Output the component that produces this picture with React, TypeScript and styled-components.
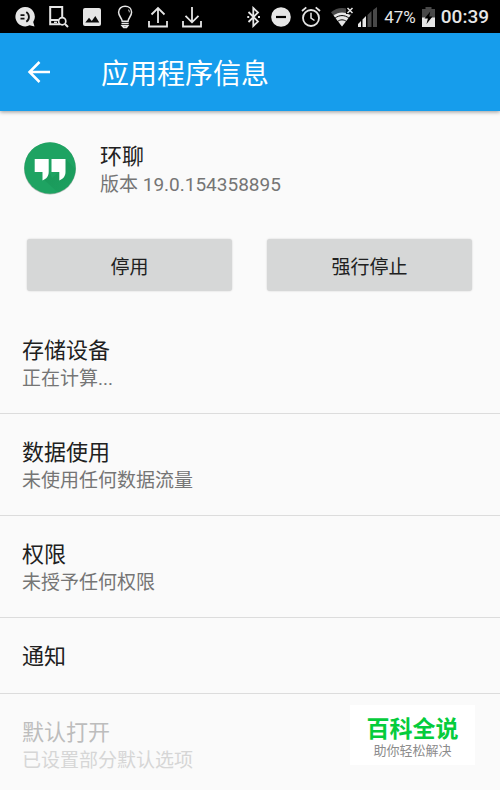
import React from "react";
import styled, { createGlobalStyle, css } from "styled-components";

const GlobalStyle = createGlobalStyle`
  *, *::before, *::after { box-sizing: border-box; }
  body {
    margin: 0;
    background: #fafafa;
    color: #212121;
    font-family: Roboto, "Noto Sans CJK SC", sans-serif;
  }
  h1, h2, p { margin: 0; font-weight: 400; }
`;

const Screen = styled.div`
  display: flex;
  flex-direction: column;
  min-height: 100vh;
`;

const StatusBar = styled.div`
  display: flex;
  justify-content: space-between;
  align-items: center;
  height: 33px;
  padding: 0 11px 0 15px;
  background: #000;
  color: #e6e6e6;
`;

const StatusGroup = styled.div<{ $gap: number }>`
  display: flex;
  align-items: center;
  gap: ${({ $gap }) => $gap}px;

  svg { display: block; flex: none; }
`;

const Battery = styled.span`
  font-size: 17px;
  line-height: 20px;
`;

const Clock = styled.time`
  font-size: 19px;
  line-height: 24px;
  font-weight: 500;
`;

const AppBar = styled.header`
  display: flex;
  align-items: center;
  gap: 49px;
  height: 78px;
  padding: 0 26px;
  background: #169dec;
  color: #fff;
  box-shadow: 0 1px 4px rgba(0, 0, 0, 0.4);
`;

const BackButton = styled.button`
  display: flex;
  padding: 0;
  border: 0;
  background: none;
  color: inherit;
  cursor: pointer;
`;

const PageTitle = styled.h1`
  padding-top: 6px;
  font-size: 28px;
  line-height: 40px;
`;

const AppSummary = styled.section`
  display: flex;
  align-items: flex-start;
  gap: 22px;
  padding: 29px 22px 0;

  svg { display: block; flex: none; }
`;

const AppText = styled.div`
  padding-top: 3px;
`;

const ItemTitle = styled.h2`
  font-size: 22px;
  line-height: 28px;
`;

const ItemDetail = styled.p`
  font-size: 19px;
  line-height: 28px;
  color: #757575;
`;

const Actions = styled.div`
  display: grid;
  grid-template-columns: 1fr 1fr;
  gap: 35px;
  padding: 40px 28px 21px 27px;
`;

const ActionButton = styled.button`
  height: 52px;
  border: 0;
  border-radius: 3px;
  background: #d6d7d7;
  box-shadow: 0 0 2px rgba(0, 0, 0, 0.18);
  color: #212121;
  font-family: inherit;
  font-size: 19px;
  cursor: pointer;
`;

const List = styled.ul`
  margin: 0;
  padding: 0;
  list-style: none;
`;

const Row = styled.li<{ $disabled?: boolean }>`
  min-height: 76px;
  padding: 25px 22px 20px;
  border-bottom: 1px solid #dcdcdc;

  &:last-child { border-bottom: 0; }

  ${({ $disabled }) =>
    $disabled &&
    css`
      ${ItemTitle} { color: #bdbdbd; }
      ${ItemDetail} { color: #d6d6d6; }
    `}
`;

const Watermark = styled.aside`
  position: fixed;
  right: 25px;
  bottom: 25px;
  width: 125px;
  padding: 12px 0 6px;
  background: #fff;
  text-align: center;
`;

const WatermarkName = styled.p`
  font-size: 23px;
  line-height: 26px;
  font-weight: 700;
  color: #05cc3c;
`;

const WatermarkSlogan = styled.p`
  font-size: 13px;
  line-height: 16px;
  color: #8c8c8c;
`;

const ChatIcon = () => (
  <svg width="20" height="20" viewBox="0 0 20 20" aria-hidden="true">
    <path d="M10 0a9.7 9.7 0 1 0 4.6 18.3L19.5 19.6 18.2 15A9.7 9.7 0 0 0 10 0z" fill="#e6e6e6" />
    <path d="M5.5 8.1h4M5.5 11.7h4" stroke="#111" strokeWidth="1.7" />
    <path d="M11.3 5c3.5 2.4 3.5 7.4 0 9.8" stroke="#111" strokeWidth="1.8" fill="none" />
  </svg>
);

const DeviceSearchIcon = () => (
  <svg width="20" height="22" viewBox="0 0 20 22" fill="none" stroke="#e6e6e6" aria-hidden="true">
    <path d="M13.2 11V1H1.2v17.3H11" strokeWidth="2" />
    <path d="M1 14h8.5" strokeWidth="2" />
    <path d="M5 16.3h3" strokeWidth="1.5" />
    <circle cx="13.2" cy="15.2" r="3.6" strokeWidth="1.7" />
    <path d="M16 18l3 3" strokeWidth="2" />
  </svg>
);

const ImageIcon = () => (
  <svg width="20" height="20" viewBox="0 0 20 20" aria-hidden="true">
    <rect x="0" y="1" width="18" height="18" rx="2" fill="#e6e6e6" />
    <path d="M2.3 15.5L6 10.7l2.8 3.2L12.3 9l4 6.5z" fill="#0a0a0a" />
  </svg>
);

const BulbIcon = () => (
  <svg width="17" height="24" viewBox="0 0 17 24" fill="none" stroke="#e6e6e6" strokeWidth="1.5" aria-hidden="true">
    <path d="M5.2 16.3c0-3-3.6-5-3.6-9C1.6 3.6 4.5 1.3 8.1 1.3s6.5 2.3 6.5 6c0 4-3.6 6-3.6 9z" />
    <path d="M4.5 18.5h7.2M5.2 20.8h5.600l-1.3 1.7H6.7z" />
    <path d="M11 4.5c1 .7 1.4 1.6 1.3 2.8" strokeWidth="1" />
  </svg>
);

const TransferIcon = ({ down = false }: { down?: boolean }) => (
  <svg width="20" height="22" viewBox="0 0 20 22" fill="none" stroke="#e6e6e6" strokeWidth="1.8" aria-hidden="true">
    <path d="M1 15v5.500h18V15" />
    <path d={down ? "M10 1v15M3.5 9.800l6.500 6.500 6.500-6.500" : "M10 17V2M3.5 8.500L10 2l6.500 6.500"} />
  </svg>
);

const BluetoothIcon = () => (
  <svg width="14" height="22" viewBox="0 0 14 22" fill="none" stroke="#e6e6e6" strokeWidth="1.8" aria-hidden="true">
    <path d="M1.5 6l9.500 9.600L6.3 20V2L11 6.400 1.5 16" />
    <path d="M.3 11h1.900M11 11h2" strokeWidth="2" />
  </svg>
);

const DoNotDisturbIcon = () => (
  <svg width="20" height="20" viewBox="0 0 20 20" aria-hidden="true">
    <circle cx="10" cy="10" r="9.8" fill="#e6e6e6" />
    <path d="M5 10h10" stroke="#000" strokeWidth="2.2" />
  </svg>
);

const AlarmIcon = () => (
  <svg width="20" height="22" viewBox="0 0 20 22" fill="none" stroke="#e6e6e6" strokeWidth="1.8" aria-hidden="true">
    <circle cx="10" cy="12" r="8" />
    <path d="M10 6.8V12l3.5 2.5" strokeWidth="1.5" />
    <path d="M1 5l4.300-3.600M19 5l-4.300-3.600" />
  </svg>
);

const WifiIcon = () => (
  <svg width="23" height="20" viewBox="0 0 23 20" aria-hidden="true">
    <path d="M11 19.5L0 5.2C6.500-.5 15.500-.5 22 5.2z" fill="#484848" />
    <path d="M11 19.5L2.6 8.6c5-4.300 11.800-4.300 16.800 0z" fill="#e6e6e6" />
    <path d="M4 11.2c4.200-3.500 9.800-3.500 14 0M6.5 14.5c2.700-2.200 6.300-2.200 9 0" fill="none" stroke="#000" strokeWidth="1" />
    <path d="M15 0h8v7h-8z" fill="#000" />
    <path d="M16.5 1l5 5M21.5 1l-5 5" stroke="#e6e6e6" strokeWidth="1.5" />
  </svg>
);

const SignalIcon = () => (
  <svg width="20" height="20" viewBox="0 0 20 20" aria-hidden="true">
    <path d="M0 20v-3l3-3v6zM4.5 20v-7.500l3.500-3.500v11z" fill="#e6e6e6" />
    <path d="M9.5 20V8l4-4v16zM15 20V3l4-3v20z" fill="#484848" />
  </svg>
);

const BatteryIcon = () => (
  <svg width="13" height="20" viewBox="0 0 13 20" aria-hidden="true">
    <path d="M3.5 0h6v2H13v18H0V2h3.500z" fill="#484848" />
    <path d="M0 10.5h13V20H0z" fill="#e6e6e6" />
    <path d="M8.3 4.5L2.5 11.500h3.400L4.5 17l6-7.500H7.2z" fill="#000" />
  </svg>
);

const BackIcon = () => (
  <svg width="26" height="24" viewBox="0 0 26 24" fill="none" stroke="#fff" strokeWidth="2.5" aria-hidden="true">
    <path d="M24 12H4M13.5 2L3.5 12l10 10" />
  </svg>
);

const HangoutsIcon = () => (
  <svg width="56" height="56" viewBox="0 0 56 56" aria-hidden="true">
    <defs>
      <linearGradient id="quoteShade" x1="0" y1="0" x2="1" y2="1">
        <stop offset="0" stopColor="#128349" />
        <stop offset="1" stopColor="#1ea362" />
      </linearGradient>
      <clipPath id="disc"><circle cx="28" cy="28" r="25.7" /></clipPath>
    </defs>
    <circle cx="28" cy="28.5" r="26" fill="#a9b7af" />
    <circle cx="28" cy="28" r="25.7" fill="#1ea362" />
    <path clipPath="url(#disc)" d="M43.500 19l16 16v25H44L20 38l7-7 3 7 7-6z" fill="url(#quoteShade)" opacity=".4" />
    <path d="M12.700 19h14v13c0 4-2.200 7-6.200 8.500V32h-7.800zM29.500 19h14v13c0 4-2.200 7-6.200 8.500V32h-7.800z" fill="#fff" />
  </svg>
);

const items = [
  { title: "存储设备", detail: "正在计算..." },
  { title: "数据使用", detail: "未使用任何数据流量" },
  { title: "权限", detail: "未授予任何权限" },
  { title: "通知" },
  { title: "默认打开", detail: "已设置部分默认选项", disabled: true },
];

export default function App() {
  return (
    <Screen>
      <GlobalStyle />
      <StatusBar>
        <StatusGroup $gap={14}>
          <ChatIcon />
          <DeviceSearchIcon />
          <ImageIcon />
          <BulbIcon />
          <TransferIcon />
          <TransferIcon down />
        </StatusGroup>
        <StatusGroup $gap={4}>
          <StatusGroup $gap={10}>
            <BluetoothIcon />
            <DoNotDisturbIcon />
            <AlarmIcon />
            <WifiIcon />
          </StatusGroup>
          <StatusGroup $gap={6}>
            <SignalIcon />
            <Battery>47%</Battery>
            <BatteryIcon />
            <Clock>00:39</Clock>
          </StatusGroup>
        </StatusGroup>
      </StatusBar>
      <AppBar>
        <BackButton type="button" aria-label="返回">
          <BackIcon />
        </BackButton>
        <PageTitle>应用程序信息</PageTitle>
      </AppBar>
      <main>
        <AppSummary>
          <HangoutsIcon />
          <AppText>
            <ItemTitle>环聊</ItemTitle>
            <ItemDetail>版本 19.0.154358895</ItemDetail>
          </AppText>
        </AppSummary>
        <Actions>
          <ActionButton type="button">停用</ActionButton>
          <ActionButton type="button">强行停止</ActionButton>
        </Actions>
        <List>
          {items.map(({ title, detail, disabled }) => (
            <Row key={title} $disabled={disabled} aria-disabled={disabled}>
              <ItemTitle>{title}</ItemTitle>
              {detail && <ItemDetail>{detail}</ItemDetail>}
            </Row>
          ))}
        </List>
      </main>
      <Watermark>
        <WatermarkName>百科全说</WatermarkName>
        <WatermarkSlogan>助你轻松解决</WatermarkSlogan>
      </Watermark>
    </Screen>
  );
}
